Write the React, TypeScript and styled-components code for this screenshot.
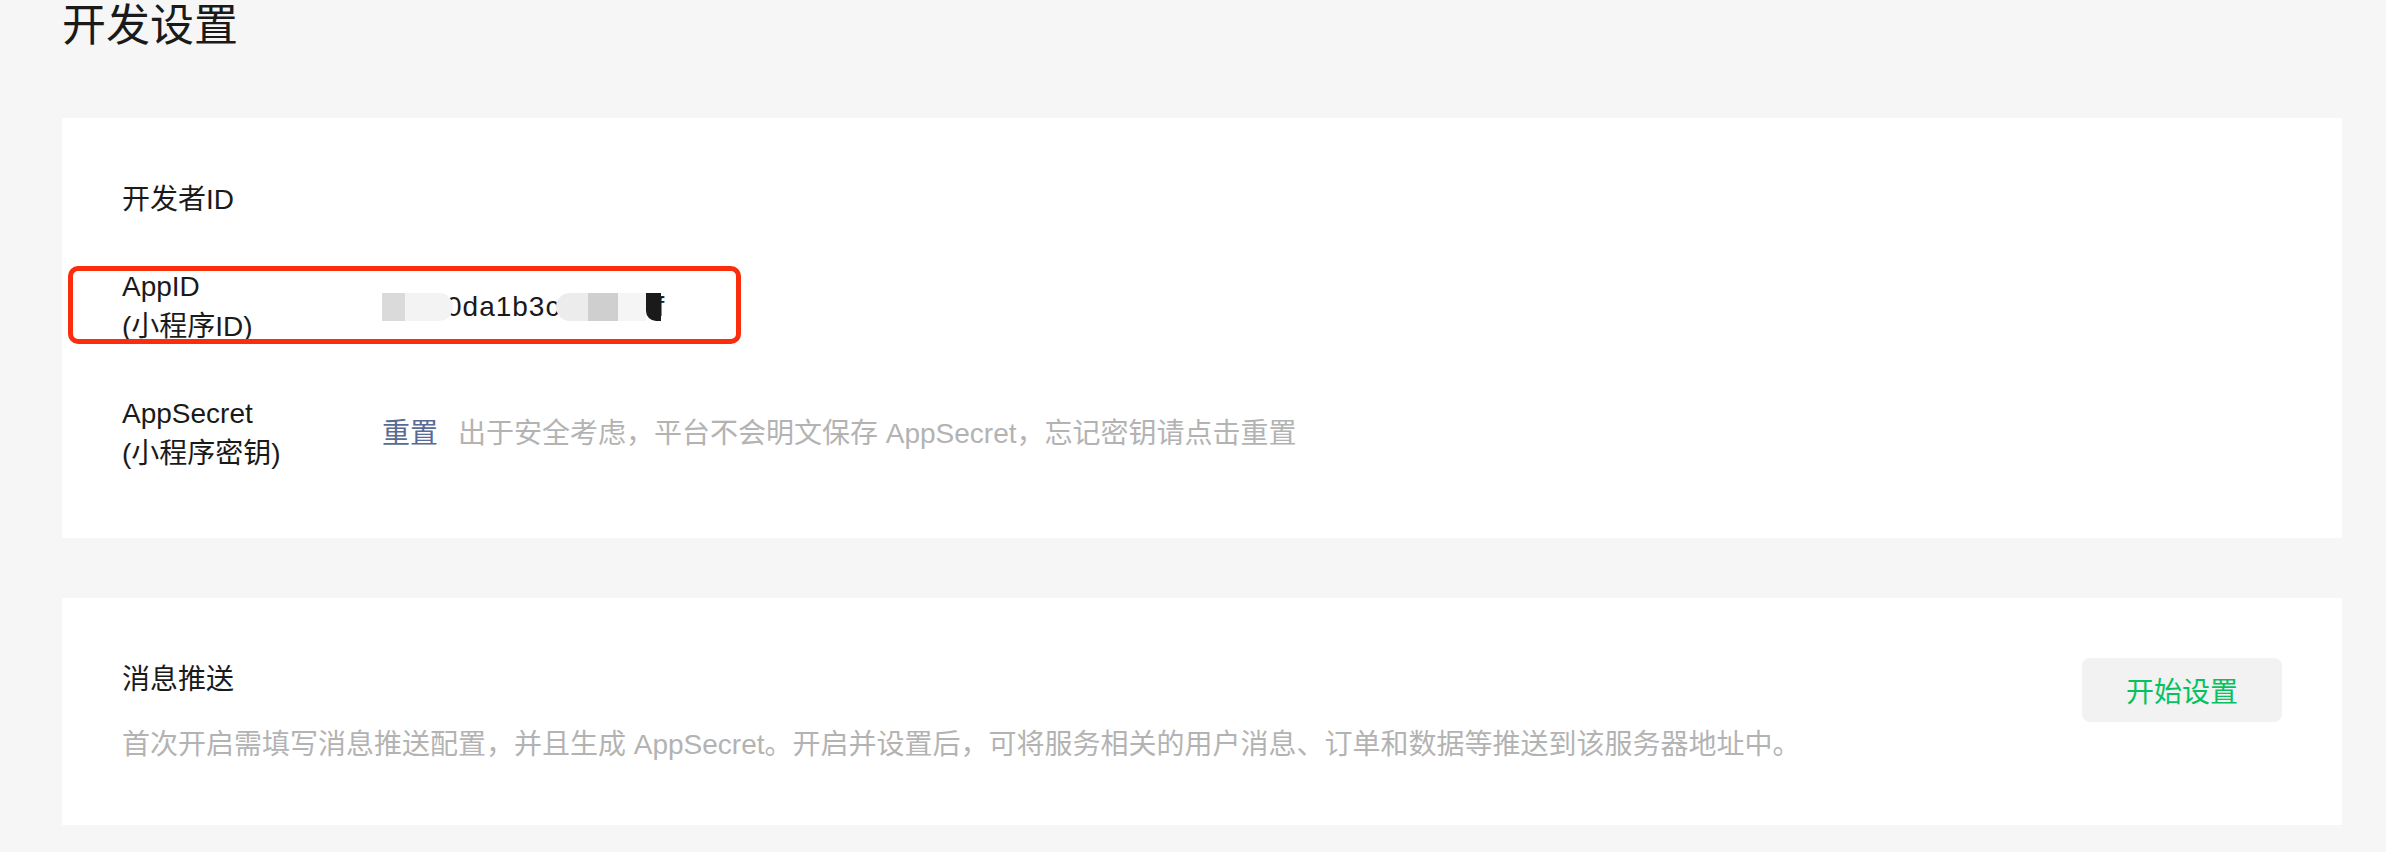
import styled, { createGlobalStyle } from "styled-components";

const GlobalStyle = createGlobalStyle`
    html, body {
        margin: 0;
        background: #f6f6f6;
    }
    body {
        font-family: "Liberation Sans", "Noto Sans CJK SC", sans-serif;
        color: #1a1a1a;
    }
`

const Page = styled.div`
    padding: 0 44px 27px 62px;
`

const PageTitle = styled.h1`
    margin: 0 0 66px;
    font-size: 44px;
    line-height: 52px;
    font-weight: 400;
    color: #1a1a1a;
`

const Card = styled.section`
    background: #fff;
    & + & {
        margin-top: 60px;
    }
`

const SettingsCard = styled(Card)`
    padding: 62px 60px 64px;
`

const PushCard = styled(Card)`
    padding: 62px 60px 60px;
    display: flex;
    justify-content: space-between;
    align-items: flex-start;
`

const Field = styled.div`
    display: grid;
    grid-template-columns: 260px 1fr;
    align-items: center;
    position: relative;
    & + & {
        margin-top: 47px;
    }
`

const Label = styled.div`
    font-size: 28px;
    line-height: 40px;
    color: #1a1a1a;
`

const Value = styled.div`
    display: flex;
    align-items: center;
    font-size: 28px;
    line-height: 40px;
    color: #1a1a1a;
`

// redaction mosaic laid over the app id
const Tile = styled.span<{ $w: number; $c: string; $r?: string }>`
    display: inline-block;
    position: relative;
    z-index: 1;
    width: ${p => p.$w}px;
    height: 28px;
    background: ${p => p.$c};
    border-radius: ${p => p.$r ?? "0"};
`

const IdText = styled.span<{ $l?: number; $r?: number }>`
    letter-spacing: 1px;
    margin-left: ${p => p.$l ?? 0}px;
    margin-right: ${p => p.$r ?? 0}px;
`

const Highlight = styled.span`
    position: absolute;
    left: -54px;
    top: -1px;
    width: 673px;
    height: 78px;
    box-sizing: border-box;
    border: 5px solid #fa2d0c;
    border-radius: 10px;
    pointer-events: none;
`

const ResetLink = styled.a`
    color: #576b95;
    text-decoration: none;
    cursor: pointer;
`

const Hint = styled.span`
    margin-left: 20px;
    color: #b3b3b3;
`

const PushInfo = styled.div`
    display: flex;
    flex-direction: column;
`

const PushTitle = styled.div`
    font-size: 28px;
    line-height: 40px;
    color: #1a1a1a;
`

const PushDesc = styled.p`
    margin: 25px 0 0;
    font-size: 28px;
    line-height: 40px;
    color: #b3b3b3;
`

const StartButton = styled.button`
    flex: none;
    width: 200px;
    height: 64px;
    margin-top: -2px;
    border: none;
    border-radius: 8px;
    background: #f2f2f2;
    color: #07c160;
    font-family: inherit;
    font-size: 28px;
    cursor: pointer;
`

export default function App() {
  return (
    <>
      <GlobalStyle />
      <Page>
        <PageTitle>开发设置</PageTitle>
        <SettingsCard>
          <Field>
            <Label>开发者ID</Label>
          </Field>
          <Field>
            <Label>AppID<br />(小程序ID)</Label>
            <Value>
              <Tile $w={23} $c="#dadada" />
              <Tile $w={48} $c="#f3f3f3" $r="0 14px 14px 0" />
              <IdText $l={-7} $r={-4}>0da1b3c</IdText>
              <Tile $w={32} $c="#ececec" $r="14px 0 0 14px" />
              <Tile $w={30} $c="#cfcfcf" />
              <Tile $w={28} $c="#f5f5f5" />
              <Tile $w={15} $c="#1a1a1a" $r="0 0 0 10px" />
              <IdText $l={-5}>f</IdText>
            </Value>
            <Highlight />
          </Field>
          <Field>
            <Label>AppSecret<br />(小程序密钥)</Label>
            <Value>
              <ResetLink>重置</ResetLink>
              <Hint>出于安全考虑，平台不会明文保存 AppSecret，忘记密钥请点击重置</Hint>
            </Value>
          </Field>
        </SettingsCard>
        <PushCard>
          <PushInfo>
            <PushTitle>消息推送</PushTitle>
            <PushDesc>首次开启需填写消息推送配置，并且生成 AppSecret。开启并设置后，可将服务相关的用户消息、订单和数据等推送到该服务器地址中。</PushDesc>
          </PushInfo>
          <StartButton>开始设置</StartButton>
        </PushCard>
      </Page>
    </>
  )
}
